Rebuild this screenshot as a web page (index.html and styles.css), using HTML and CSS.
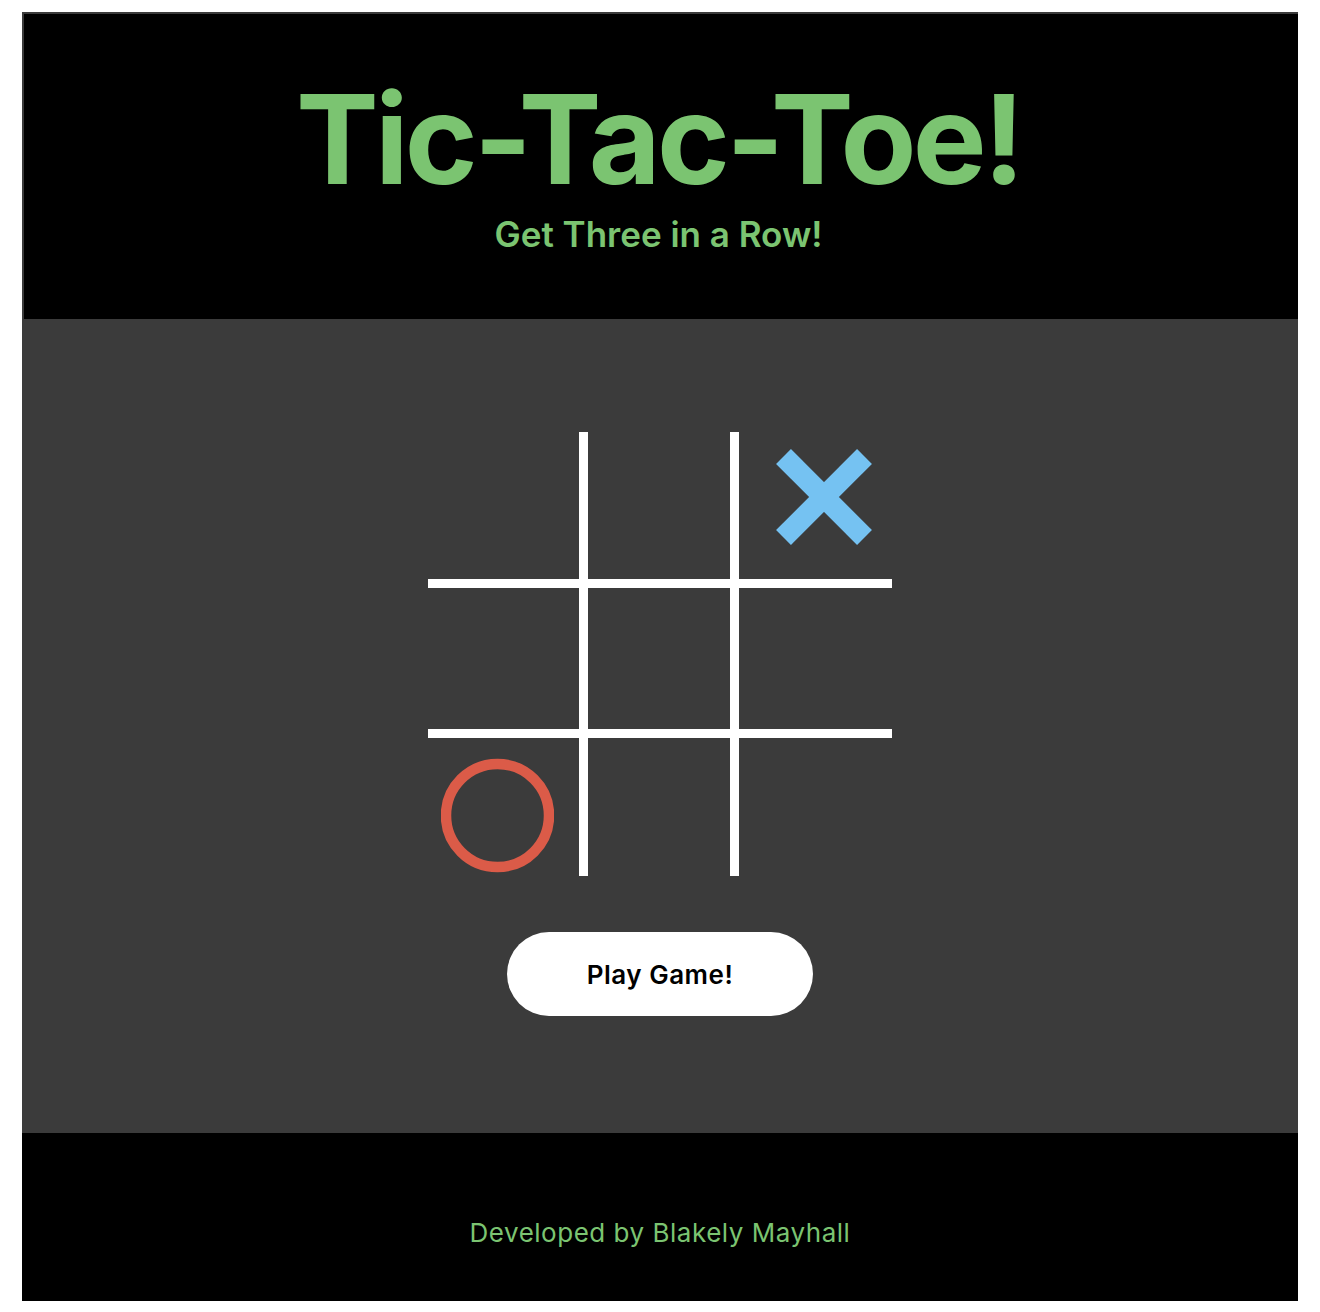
FILE: index.html
```html
<!DOCTYPE html>
<html lang="en">
<head>
<meta charset="utf-8">
<title>Tic-Tac-Toe!</title>
<link rel="stylesheet" href="styles.css">
</head>
<body>
<div class="page">
  <header class="header">
    <h1 class="title">Tic-Tac-Toe!</h1>
    <p class="subtitle">Get Three in a Row!</p>
  </header>
  <main class="main">
    <div class="board">
      <div class="cell"></div>
      <div class="cell"></div>
      <div class="cell cell-x">
        <svg class="mark-x" width="96" height="96" viewBox="0 0 96 96" aria-hidden="true">
          <line x1="7.5" y1="7.5" x2="88.5" y2="88.5" stroke="#75c2f2" stroke-width="21"/>
          <line x1="88.5" y1="7.5" x2="7.5" y2="88.5" stroke="#75c2f2" stroke-width="21"/>
        </svg>
      </div>
      <div class="cell"></div>
      <div class="cell"></div>
      <div class="cell"></div>
      <div class="cell cell-o">
        <svg class="mark-o" width="113" height="115" viewBox="0 0 113 115" aria-hidden="true">
          <circle cx="56.5" cy="57.5" r="51.5" fill="none" stroke="#db5b48" stroke-width="10.5"/>
        </svg>
      </div>
      <div class="cell"></div>
      <div class="cell"></div>
    </div>
    <button class="play" type="button">Play Game!</button>
  </main>
  <footer class="footer">
    <p class="credit">Developed by Blakely Mayhall</p>
  </footer>
</div>
</body>
</html>
```
FILE: styles.css
```css
html, body {
  background: #ffffff;
}
body {
  margin: 12px 22px;
  font-family: Inter, "Noto Sans", "Liberation Sans", sans-serif;
}
.page {
  background: #3b3b3b;
  display: flex;
  flex-direction: column;
}
.header {
  background: #000000;
  margin: 2px -3px 0 2px;
  height: 305px;
  box-sizing: border-box;
  padding: 63px 8px 0 0;
  text-align: center;
  color: #7bc471;
}
.title {
  margin: 0;
  font-size: 124px;
  line-height: 124px;
  font-weight: 700;
  letter-spacing: -0.03em;
}
.subtitle {
  margin: 13px 0 0;
  font-size: 35px;
  line-height: 41px;
  font-weight: 600;
  letter-spacing: 0;
}
.main {
  height: 814px;
  box-sizing: border-box;
  padding-top: 113px;
  display: flex;
  flex-direction: column;
  align-items: center;
}
.board {
  display: grid;
  grid-template-columns: 151px 142px 153px;
  grid-template-rows: 147px 141px 138px;
  gap: 9px;
  background: #ffffff;
}
.cell {
  background: #3b3b3b;
  display: flex;
}
.cell-x {
  padding: 17px 0 0 37px;
}
.cell-o {
  padding: 20px 0 0 13px;
}
.play {
  margin-top: 56px;
  width: 306px;
  height: 84px;
  border: none;
  border-radius: 42px;
  background: #ffffff;
  color: #000000;
  font-family: Inter, "Noto Sans", "Liberation Sans", sans-serif;
  font-size: 26px;
  font-weight: 600;
  letter-spacing: 0.02em;
  padding: 0;
  cursor: pointer;
}
.footer {
  background: #000000;
  height: 168px;
  box-sizing: border-box;
  padding-top: 84px;
  text-align: center;
}
.credit {
  margin: 0;
  color: #7bc471;
  font-size: 26px;
  line-height: 32px;
  font-weight: 400;
  letter-spacing: 0.02em;
}
```
